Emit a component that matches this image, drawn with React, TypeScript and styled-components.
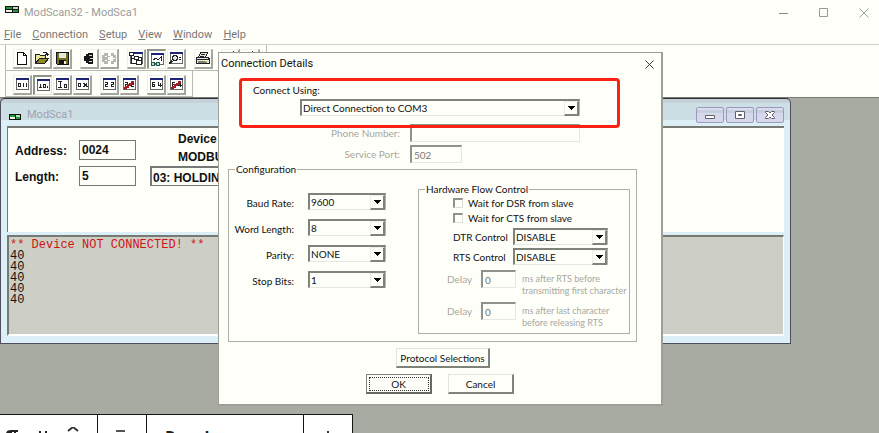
import React from "react";
import styled, { createGlobalStyle, css } from "styled-components";

const paper = "#fffff9";
const shade = "#8f938a";
const uiFont = 'Lato, "Liberation Sans", sans-serif';
const boldFont = '"Liberation Sans", Arial, sans-serif';
const titleFont = 'Roboto, "Noto Sans", sans-serif';

const GlobalStyle = createGlobalStyle`
  * { box-sizing: border-box; }
  body { margin: 0; background: ${paper}; color: #111; font: 10px/12px ${uiFont}; }
  button, input, select { font: inherit; color: inherit; margin: 0; padding: 0; border-radius: 0; }
  svg { display: block; flex: none; }
`;

const Desktop = styled.div`
  position: relative;
  display: flex;
  flex-direction: column;
  min-height: 100vh;
  overflow: hidden;
`;

const TitleBar = styled.header`
  display: flex;
  align-items: center;
  height: 25px;
  padding: 0 5px;
  color: #9c9c9c;
  font: 11px/16px ${titleFont};
`;

const AppTitle = styled.h1`
  flex: 1;
  margin: 0 0 0 5px;
  font: inherit;
`;

const Logo = styled.svg`
  width: 14px;
  height: 7px;
  align-self: flex-start;
  margin-top: 6px;
`;

const CaptionButton = styled.button`
  display: grid;
  place-items: center;
  width: 20px;
  height: 20px;
  margin-left: 20px;
  border: 0;
  background: none;
`;

const MenuBar = styled.nav`
  display: flex;
  gap: 11px;
  height: 20px;
  padding: 1px 4px;
  border-bottom: 1px solid #cfd0c8;
`;

const MenuLink = styled.a`
  color: #777;
  text-decoration: none;
  font: 11px/18px ${titleFont};
`;

const ToolBar = styled.div`
  display: flex;
  align-items: center;
  gap: 8px;
  width: fit-content;
  height: 26px;
  margin-left: 5px;
  padding: 2px 6px 0 7px;
  border: solid #b9bbb2;
  border-width: 0 1px 1px 1px;
`;

const ToolGroup = styled.div`
  display: flex;
  gap: 1px;
`;

const ToolButton = styled.button<{ $pressed?: boolean }>`
  display: grid;
  place-items: center;
  width: 19px;
  height: 20px;
  border: solid;
  border-width: 1px 2px 2px 1px;
  border-color: #f0f0ea #a3a69d #a3a69d #f0f0ea;
  background: ${paper};
  ${(p) =>
    p.$pressed &&
    css`
      border-width: 2px 1px 1px 2px;
      border-color: ${shade} #e4e5de #e4e5de ${shade};
    `}
`;

const Workspace = styled.main`
  position: relative;
  flex: 1;
  min-height: 336px;
  border-top: 1px solid #777a72;
  background: #a8aba2;
`;

const ChildWindow = styled.section`
  position: absolute;
  top: 0;
  left: 0;
  display: flex;
  flex-direction: column;
  width: 90%;
  padding: 0 6px 7px;
  border: 1px solid #514e60;
  border-top-color: #33333a;
  border-radius: 5px 5px 0 0;
  background: linear-gradient(#c5d0d8 0 4px, #cbdfe5 4px 21px, #dceff6 21px);
`;

const ChildTitle = styled.div`
  display: flex;
  align-items: center;
  gap: 5px;
  height: 27px;
  padding: 5px 0 0 1px;
  color: #a39fb0;
  font: 11px/16px ${titleFont};
`;

const ChildName = styled.h2`
  flex: 1;
  margin: 0;
  font: inherit;
`;

const ChildLogo = styled(Logo)`
  height: 6px;
  margin: 10px 0 0;
`;

const GlassButton = styled.button`
  display: grid;
  place-items: center;
  width: 28px;
  height: 16px;
  margin-left: -3px;
  border: 1px solid #9c99bd;
  border-radius: 2px;
  background: linear-gradient(#dcdcf0 0 2px, #c5d0dc 2px 5px, #d6d8ec 5px);
`;

const PointPanel = styled.div`
  display: grid;
  grid-template-columns: 64px 57px auto 1fr;
  grid-template-rows: 20px 20px;
  column-gap: 0;
  row-gap: 6px;
  align-items: start;
  height: 106px;
  padding: 12px 0 0 7px;
  border: 1px solid #777a72;
  border-width: 2px 0 0 1px;
  background: ${paper};
  font: bold 12px/20px ${boldFont};
`;

const PointLabel = styled.label`
  line-height: 23px;
`;

const PointInput = styled.input`
  width: 100%;
  height: 20px;
  padding: 0 2px;
  border: 1px solid #777;
  background: ${paper};
`;

const DeviceCaption = styled.div`
  margin: -10px 0 0 42px;
  line-height: 18px;
`;

const PointType = styled.select`
  appearance: none;
  width: 180px;
  height: 20px;
  margin-left: 14px;
  padding: 0 1px;
  border: 1px solid #777;
  border-width: 2px 1px 1px 2px;
  background: ${paper};
`;

const DataPane = styled.div`
  height: 101px;
  margin-top: 3px;
  padding: 2px 1px 0;
  border: solid;
  border-width: 2px 1px 2px 2px;
  border-color: #777a72 #fff #fff #777a72;
  background: #cdcfc6;
  font: 12px/11px "Liberation Mono", monospace;
`;

const Warning = styled.div`
  color: #d01414;
  line-height: 12px;
`;

const Readings = styled.pre`
  margin: 0;
  font: inherit;
`;

const Dialog = styled.section`
  position: absolute;
  top: 52px;
  left: 218px;
  width: 445px;
  padding-bottom: 10px;
  border: 1px solid #9ea097;
  border-right-width: 2px;
  border-bottom-width: 2px;
  background: ${paper};
`;

const DialogTitle = styled.header`
  display: flex;
  align-items: center;
  justify-content: space-between;
  height: 22px;
  padding: 0 3px 0 2px;
  font: 11px/16px ${titleFont};
`;

const DialogName = styled.h2`
  margin: 0;
  font: inherit;
`;

const DialogClose = styled(CaptionButton)`
  height: 18px;
  width: 17px;
  margin: 0;
`;

const Highlight = styled.div`
  position: absolute;
  top: 25px;
  left: 20px;
  width: 381px;
  height: 50px;
  border: 3px solid #fb2114;
  border-radius: 4px;
  pointer-events: none;
`;

const ConnectBlock = styled.div`
  display: flex;
  flex-direction: column;
  gap: 3px;
  padding: 9px 0 0 34px;
`;

const ConnectSelect = styled.div`
  width: 280px;
  margin-left: 47px;
`;

const EndpointRows = styled.div`
  display: grid;
  grid-template-columns: 181px 170px;
  gap: 3px 10px;
  align-items: center;
  padding-top: 8px;
  color: #a6a8a0;
`;

const RightLabel = styled.label`
  text-align: right;
  white-space: nowrap;
`;

const SunkenInput = styled.input<{ $width: string }>`
  width: ${(p) => p.$width};
  height: 18px;
  padding: 0 2px;
  border: solid;
  border-width: 2px 1px 1px 2px;
  border-color: ${shade} #e6e7e0 #e6e7e0 ${shade};
  background: ${paper};
  color: #777;
`;

const Combo = styled.span`
  display: grid;
  width: 100%;
`;

const ComboField = styled.select`
  appearance: none;
  grid-area: 1 / 1;
  width: 100%;
  height: 17px;
  padding: 0 18px 0 1px;
  border: solid;
  border-width: 2px 1px 1px 2px;
  border-color: #7e8279 #b5b7af #e6e7e0 #7e8279;
  background: ${paper};
  line-height: 13px;
`;

const ComboArrow = styled.span`
  grid-area: 1 / 1;
  place-self: center end;
  display: grid;
  place-items: center;
  width: 15px;
  height: 15px;
  margin: 1px 1px 0 0;
  border: solid;
  border-width: 1px 2px 2px 1px;
  border-color: #eeeee8 #7e8279 #7e8279 #eeeee8;
  background: ${paper};
  pointer-events: none;
`;

const Group = styled.fieldset`
  min-width: 0;
  margin: 0;
  padding: 0;
  border: 1px solid #aeb0a7;
`;

const Legend = styled.legend`
  margin-left: 6px;
  padding: 0 1px;
  line-height: 12px;
`;

const ConfigGroup = styled(Group)`
  margin: 0 24px 0 9px;
  padding-bottom: 7px;
`;

const ConfigColumns = styled.div`
  display: grid;
  grid-template-columns: 157px 1fr;
  gap: 32px;
  padding-right: 6px;
`;

const SerialRows = styled.div`
  display: grid;
  grid-template-columns: 65px 78px;
  grid-auto-rows: 17px;
  gap: 9px 14px;
  padding-top: 18px;
`;

const SettingLabel = styled(RightLabel)`
  padding-top: 4px;
`;

const FlowGroup = styled(Group)`
  margin-top: 8px;
  padding-bottom: 4px;
`;

const CheckRow = styled.label`
  display: flex;
  align-items: center;
  gap: 5px;
  height: 15px;
  margin-left: 34px;
`;

const CheckBox = styled.input`
  appearance: none;
  width: 10px;
  height: 10px;
  border: solid;
  border-width: 2px 1px 1px 2px;
  border-color: ${shade} #dcddd5 #dcddd5 ${shade};
  &:checked { background: #333; }
`;

const ControlRow = styled.div`
  display: grid;
  grid-template-columns: 60px 95px;
  align-items: center;
  margin: 3px 0 0 34px;
  white-space: nowrap;
`;

const DelayRow = styled.div`
  display: grid;
  grid-template-columns: 34px 35px 1fr;
  margin: 5px 0 0 28px;
  color: #a6a8a0;
`;

const DelayLabel = styled.label`
  padding-top: 3px;
`;

const DelayNote = styled.span`
  padding: 3px 0 0 6px;
  font-size: 9px;
  line-height: 12px;
  white-space: pre;
`;

const Actions = styled.div`
  display: flex;
  justify-content: center;
  gap: 16px;
  margin-top: 6px;
`;

const PushButton = styled.button<{ $default?: boolean; $wide?: boolean }>`
  width: ${(p) => (p.$wide ? "94px" : "66px")};
  height: 20px;
  margin-left: ${(p) => (p.$wide ? "6px" : "0")};
  padding: 1px;
  border: solid;
  border-width: 1px 2px 2px 1px;
  border-color: #e3e4dc #7e8279 #7e8279 #e3e4dc;
  background: ${paper};
  white-space: nowrap;
  ${(p) =>
    p.$default &&
    css`
      border-color: #7e8279 #666a61 #666a61 #7e8279;
      outline: 1px dotted #333;
      outline-offset: -4px;
    `}
`;

const EditorStrip = styled.div`
  position: absolute;
  bottom: 0;
  left: 0;
  display: flex;
  height: 19px;
  overflow: hidden;
  border-top: 1px solid #161616;
  background: #fff;
  color: #202020;
  font: bold 16px/20px "Open Sans", sans-serif;
`;

const StripButton = styled.button<{ $width: string }>`
  display: flex;
  align-items: flex-start;
  width: ${(p) => p.$width};
  height: 40px;
  padding: 12px 0 0 18px;
  border: 0;
  border-right: 1px solid #161616;
  background: #fff;
`;

const Marks = styled.svg`
  width: 80px;
  height: 20px;
  margin-left: -12px;
`;

const LogoArt = () => (
  <>
    <path d="M0 0h14v7H0z" fill="#111" />
    <path d="M1 1h6v2H1zM8 4h5v2H8z" fill="#239a35" />
    <path d="M1 4h6v2H1z" fill="#e8f3e5" />
    <path d="M8 1h5v2H8z" fill="#b9ddb9" />
  </>
);

const Cross = ({ size, color }: { size: number; color: string }) => (
  <svg width={size} height={size} viewBox="0 0 10 10">
    <path d="M.5.5l9 9M9.5.5l-9 9" stroke={color} fill="none" />
  </svg>
);

const Glyph = ({ children }: { children: React.ReactNode }) => (
  <svg width="16" height="16" viewBox="0 0 16 16" shapeRendering="crispEdges">
    {children}
  </svg>
);

const frame = (
  <>
    <path d="M2.5 2.5h12v11h-12z" fill="#fff" stroke="#666" />
    <path d="M2 2h13v2H2z" fill="#202474" />
  </>
);

const ink = { fill: "none", stroke: "#222" };
const slash = <path d="M3 12h2v-1h2v-2h2V8h2V6h2" fill="none" stroke="#a11e22" strokeWidth="1.5" />;

const formatFigures: Record<string, React.ReactNode> = {
  Binary: <path d="M4.5 7.5h2v3h-2zM9.5 7v4M12.5 7v4" {...ink} />,
  Hex: <path d="M5.5 7v4M4 10.5h3M8.5 7.5h2v3h-2zM12.5 9v2" {...ink} />,
  Integer: <path d="M4 5.5h4M6.5 6v5M4 11.5h4M10.5 8.5h2v3h-2z" {...ink} />,
  Unsigned: <path d="M4.5 7.5h2v3h-2zM9 7h1v1h1v1h1v1h1v1M13 7h-1v1h-1v1h-1v1H9" {...ink} />,
  Float: <path d="M4 6.5h2v2h-2v2h3M10 6.5h2v2h-2v2h3" {...ink} />,
  "Swapped float": <><path d="M4 6.5h2v2h-2v2h3M10 6.5h2v2h-2v2h3" {...ink} />{slash}</>,
  Double: <path d="M7 6.5H4.5v4h2v-2h-2M10.5 6v3h3M12.5 7v4" {...ink} />,
  "Swapped double": <><path d="M7 6.5H4.5v4h2v-2h-2M10.5 6v3h3M12.5 7v4" {...ink} />{slash}</>,
};

const displayFormats = Object.fromEntries(
  Object.entries(formatFigures).map(([name, figure]) => [name, <>{frame}{figure}</>]),
);

const commands: Record<string, React.ReactNode> = {
  New: <path d="M3.5 2.5h6l3 3v9h-9zM9.5 2.5v3h3" fill="#fff" stroke="#111" />,
  Open: (
    <>
      <path d="M1.5 13.5v-9h4l1 1h5v3" fill="#e8e49a" stroke="#222" />
      <path d="M1.5 13.5l4-5h9l-4 5z" fill="#8e8b27" stroke="#222" />
      <path d="M9 2.5h3v1h1v2M11 4.5h4" {...ink} />
    </>
  ),
  Save: (
    <>
      <path d="M2.5 2.5h12v12h-11l-1-1z" fill="#73711f" stroke="#111" />
      <path d="M5 3h7v5H5z" fill="#e7e7de" />
      <path d="M5 10h7v5H5z" fill="#151515" />
      <path d="M10 11h2v3h-2z" fill="#f1f1e9" />
    </>
  ),
  Connect: (
    <>
      <path d="M5 4h2V3h5v11H7v-1H5v-2H3V6h2z" fill="#161616" />
      <path d="M8 5h3v1H8zM9 8h4v1H9zM8 11h3v1H8z" fill="#d9dad2" />
    </>
  ),
  Disconnect: (
    <>
      <path d="M1 5h2V3h4v3h2v1H7v3h2v1H7v3H3v-2H1zM10 3h3v2h2v7h-2v2h-3v-3h2V6h-2z" fill="#b7b8b1" />
      <path d="M4 6h2v1H4zM4 10h2v1H4zM12 8h2v1h-2z" fill="#fff" />
    </>
  ),
  "Data definition": (
    <>
      {frame}
      <path d="M1.5 2.5h4v3h-4zM6.5 6.5h4v3h-4zM8.5 10.5h5v4h-5z" fill="#fff" stroke="#222" />
      <path d="M3.5 6v7h5M4 8.5h3M11 7.5h2v3" {...ink} />
    </>
  ),
  "Show data": (
    <>
      {frame}
      <path d="M4 9l3-2 2 2 3-3v4" {...ink} />
      <path d="M2.5 11.5h3v3h-3zM7.5 11.5h3v3h-3zM5 12.5h2" fill="#b8dad4" stroke="#245951" />
    </>
  ),
  "Show traffic": (
    <>
      {frame}
      <path d="M5.5 5.5h3v1h1v3h-1v1h-3v-1h-1v-3h1z" fill="#d5ece8" stroke="#222" />
      <path d="M4 11l-3 3" stroke="#222" strokeWidth="2" />
      <path d="M11 7.5h2M11 9.5h2" {...ink} />
    </>
  ),
  Print: (
    <>
      <path d="M5.5 2.5h7l-2 5h-7zM1.5 7.5h12l1 2v4h-13z" fill="#e6e7df" stroke="#222" />
      <path d="M3 11h9v2H3z" fill="#7f8278" />
      <path d="M6 4.5h4M5 6.5h4M2 9.5h12" {...ink} />
      <path d="M10 11h2v1h-2z" fill="#d7c62c" />
    </>
  ),
  About: <path d="M11.5 1v2M8.5 6v7" {...ink} />,
  Help: <path d="M10.5 1v2M5 6.5h6v4H8v3" {...ink} />,
};

type ToolSetProps = { art: Record<string, React.ReactNode>; groups: string[][]; pressed: string };

const ToolSet = ({ art, groups, pressed }: ToolSetProps) => (
  <ToolBar>
    {groups.map((names) => (
      <ToolGroup key={names[0]}>
        {names.map((name) => (
          <ToolButton key={name} type="button" aria-label={name} $pressed={name === pressed}>
            <Glyph>{art[name]}</Glyph>
          </ToolButton>
        ))}
      </ToolGroup>
    ))}
  </ToolBar>
);

const ComboBox = ({ id, value }: { id: string; value: string }) => (
  <Combo>
    <ComboField id={id} defaultValue={value}>
      <option>{value}</option>
    </ComboField>
    <ComboArrow>
      <svg width="7" height="4" viewBox="0 0 7 4" shapeRendering="crispEdges">
        <path d="M0 0h7v1H6v1H5v1H4v1H3V3H2V2H1V1H0z" />
      </svg>
    </ComboArrow>
  </Combo>
);

const menus = ["File", "Connection", "Setup", "View", "Window", "Help"];

const serialSettings = [
  ["Baud Rate", "9600"],
  ["Word Length", "8"],
  ["Parity", "NONE"],
  ["Stop Bits", "1"],
];

const delays = [
  ["rts-delay", "ms after RTS before\ntransmitting first character"],
  ["last-delay", "ms after last character\nbefore releasing RTS"],
];

const readings = [40, 40, 40, 40, 40];

const ConnectionDialog = () => (
  <Dialog role="dialog" aria-labelledby="dialog-name">
    <DialogTitle>
      <DialogName id="dialog-name">Connection Details</DialogName>
      <DialogClose type="button" aria-label="Close dialog"><Cross size={9} color="#222" /></DialogClose>
    </DialogTitle>
    <ConnectBlock>
      <label htmlFor="connect">Connect Using:</label>
      <ConnectSelect><ComboBox id="connect" value="Direct Connection to COM3" /></ConnectSelect>
    </ConnectBlock>
    <EndpointRows>
      <RightLabel htmlFor="phone">Phone Number:</RightLabel>
      <SunkenInput id="phone" $width="170px" disabled />
      <RightLabel htmlFor="port">Service Port:</RightLabel>
      <SunkenInput id="port" $width="52px" defaultValue="502" disabled />
    </EndpointRows>
    <ConfigGroup>
      <Legend>Configuration</Legend>
      <ConfigColumns>
        <SerialRows>
          {serialSettings.map(([name, value]) => (
            <React.Fragment key={name}>
              <SettingLabel htmlFor={name}>{name}:</SettingLabel>
              <ComboBox id={name} value={value} />
            </React.Fragment>
          ))}
        </SerialRows>
        <FlowGroup>
          <Legend>Hardware Flow Control</Legend>
          {["DSR", "CTS"].map((line) => (
            <CheckRow key={line}>
              <CheckBox type="checkbox" />
              {`Wait for ${line} from slave`}
            </CheckRow>
          ))}
          {["DTR", "RTS"].map((line) => (
            <ControlRow key={line}>
              <label htmlFor={line}>{`${line} Control`}</label>
              <ComboBox id={line} value="DISABLE" />
            </ControlRow>
          ))}
          {delays.map(([id, note]) => (
            <DelayRow key={id}>
              <DelayLabel htmlFor={id}>Delay</DelayLabel>
              <SunkenInput id={id} $width="35px" defaultValue="0" disabled />
              <DelayNote>{note}</DelayNote>
            </DelayRow>
          ))}
        </FlowGroup>
      </ConfigColumns>
    </ConfigGroup>
    <Actions>
      <PushButton type="button" $wide>Protocol Selections</PushButton>
    </Actions>
    <Actions>
      <PushButton type="button" $default>OK</PushButton>
      <PushButton type="button">Cancel</PushButton>
    </Actions>
    <Highlight />
  </Dialog>
);

export default function App() {
  return (
    <Desktop>
      <GlobalStyle />
      <TitleBar>
        <Logo viewBox="0 0 14 7" shapeRendering="crispEdges"><LogoArt /></Logo>
        <AppTitle>ModScan32 - ModSca1</AppTitle>
        <CaptionButton type="button" aria-label="Minimize">
          <svg width="10" height="10" viewBox="0 0 10 10"><path d="M0 5.5h9" stroke="#888" /></svg>
        </CaptionButton>
        <CaptionButton type="button" aria-label="Maximize">
          <svg width="10" height="10" viewBox="0 0 10 10"><path d="M.5.5h8v8h-8z" fill="none" stroke="#999" /></svg>
        </CaptionButton>
        <CaptionButton type="button" aria-label="Close"><Cross size={10} color="#8ea0a4" /></CaptionButton>
      </TitleBar>
      <MenuBar>
        {menus.map((name) => (
          <MenuLink key={name} href="#"><u>{name[0]}</u>{name.slice(1)}</MenuLink>
        ))}
      </MenuBar>
      <ToolSet
        art={commands}
        groups={[["New", "Open", "Save"], ["Connect", "Disconnect"], ["Data definition", "Show data", "Show traffic"], ["Print"], ["About", "Help"]]}
        pressed="Show data"
      />
      <ToolSet
        art={displayFormats}
        groups={[["Binary", "Hex", "Integer", "Unsigned"], ["Float", "Swapped float"], ["Double", "Swapped double"]]}
        pressed="Hex"
      />
      <Workspace>
        <ChildWindow>
          <ChildTitle>
            <ChildLogo viewBox="0 0 14 7" shapeRendering="crispEdges"><LogoArt /></ChildLogo>
            <ChildName>ModSca1</ChildName>
            <GlassButton type="button" aria-label="Minimize document">
              <svg width="10" height="8" viewBox="0 0 10 8"><path d="M.5 4.5h9v3h-9z" fill="#fff" stroke="#62606e" /></svg>
            </GlassButton>
            <GlassButton type="button" aria-label="Maximize document">
              <svg width="10" height="8" viewBox="0 0 10 8"><path d="M.5.5h9v7h-9zM3.5 3.5h3v1h-3z" fill="#fff" stroke="#62606e" /></svg>
            </GlassButton>
            <GlassButton type="button" aria-label="Close document">
              <svg width="10" height="8" viewBox="0 0 10 8">
                <path d="M.5.5h3L5 2 6.5.5h3v1L7 4l2.5 2.5v1h-3L5 6 3.5 7.5h-3v-1L3 4 .5 1.5z" fill="#fff" stroke="#62606e" />
              </svg>
            </GlassButton>
          </ChildTitle>
          <PointPanel>
            <PointLabel htmlFor="address">Address:</PointLabel>
            <PointInput id="address" defaultValue="0024" />
            <DeviceCaption>Device<br />MODBUS</DeviceCaption>
            <span />
            <PointLabel htmlFor="length">Length:</PointLabel>
            <PointInput id="length" defaultValue="5" />
            <PointType aria-label="Point type"><option>03: HOLDING</option></PointType>
          </PointPanel>
          <DataPane>
            <Warning>** Device NOT CONNECTED! **</Warning>
            <Readings>{readings.join("\n")}</Readings>
          </DataPane>
        </ChildWindow>
      </Workspace>
      <ConnectionDialog />
      <EditorStrip>
        <StripButton type="button" $width="98px" aria-label="Paragraph marks">
          <Marks viewBox="0 0 80 20">
            <path d="M0 7q0-4 5-4h7v2h-2v12H8V5H6v6q-6 0-6-4z" fill="#222" />
            <path d="M34 4v9M40 4v9" stroke="#222" strokeWidth="2" />
            <path d="M62 4l5-4 5 4" stroke="#333" strokeWidth="2" fill="none" />
          </Marks>
        </StripButton>
        <StripButton type="button" $width="49px" aria-label="Align">
          <svg width="10" height="20" viewBox="0 0 10 20"><path d="M0 4h9M0 10h9" stroke="#555" strokeWidth="2" /></svg>
        </StripButton>
        <StripButton type="button" $width="157px">Regular</StripButton>
        <StripButton type="button" $width="49px" aria-label="Insert">
          <svg width="12" height="20" viewBox="0 0 12 20"><path d="M6 4v12" stroke="#333" strokeWidth="2" /></svg>
        </StripButton>
      </EditorStrip>
    </Desktop>
  );
}
